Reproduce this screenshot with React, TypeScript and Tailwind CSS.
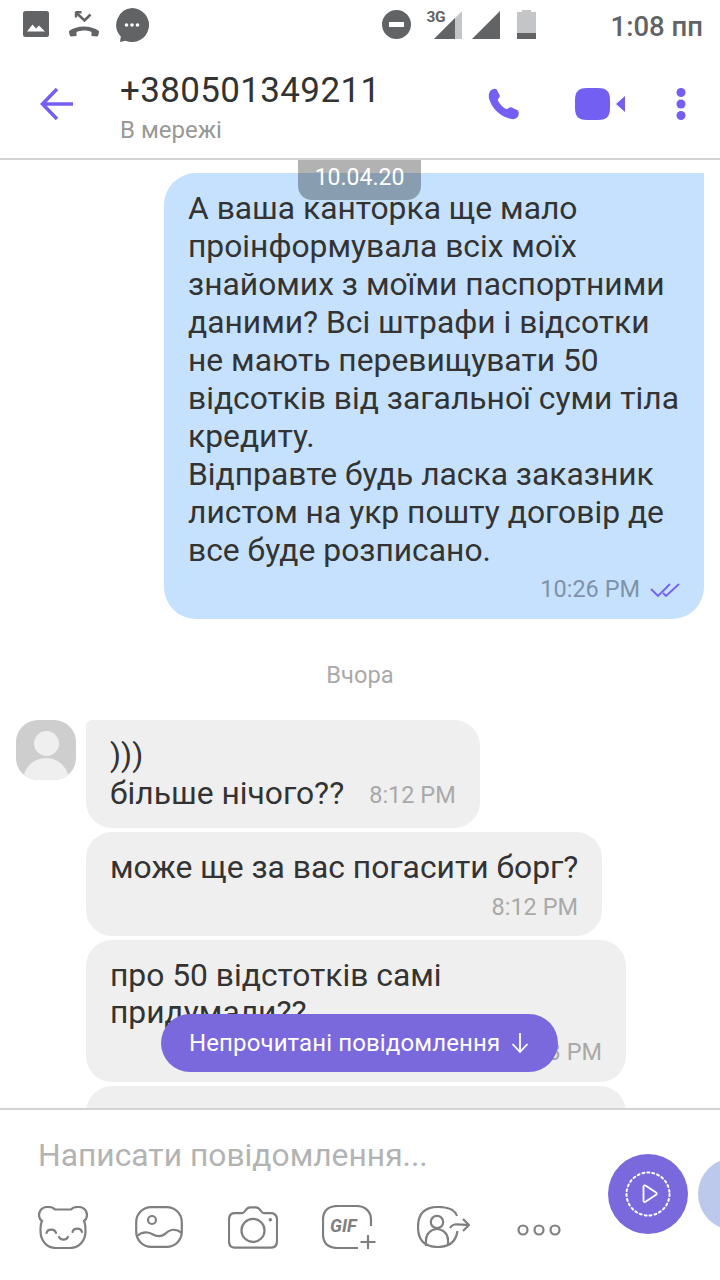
import React from "react";

const P = "#7360f2";
const G = "#7f7f7f";

function Icon({ w, h, vb, children, className = "" }: { w: number; h: number; vb?: string; children: React.ReactNode; className?: string }) {
  return (
    <svg width={w} height={h} viewBox={vb ?? `0 0 ${w} ${h}`} fill="none" className={`block shrink-0 ${className}`}>
      {children}
    </svg>
  );
}

function StatusBar() {
  return (
    <div className="flex h-[50px] items-center pl-[23px] pr-[17px] text-[#616365]">
      <Icon w={26} h={26} className="-mt-[2px]">
        <rect x="0" y="0" width="26" height="26" rx="2.500" fill="#616365" />
        <path d="M4 20.500l5.500-7 3.500 4 3-3 6 6z" fill="#fff" />
      </Icon>
      <Icon w={30} h={26} className="-mt-[2px] ml-[20px]">
        <path d="M7.500 2l8 7.500 6-6" stroke="#616365" strokeWidth="2.600" />
        <path d="M7 1.200h5.500M7 .5v6" stroke="#616365" strokeWidth="2.400" />
        <path d="M0 20c8-6 22-6 30 0 0 2-.5 4-1.500 5.500l-6-.5v-4c-4-2-10-2-15 0v4l-6 .5C.5 24 0 22 0 20z" fill="#616365" />
      </Icon>
      <Icon w={34} h={34} className="ml-[16px] -mt-[1px]">
        <path d="M17 0a17 17 0 1 1-6.500 32.700L5 34l.8-5.500A17 17 0 0 1 17 0z" fill="#616365" />
        <circle cx="11.500" cy="17" r="1.800" fill="#fff" />
        <circle cx="17" cy="17" r="1.800" fill="#fff" />
        <circle cx="22.500" cy="17" r="1.800" fill="#fff" />
      </Icon>
      <div className="flex-1" />
      <Icon w={29} h={29} className="-mt-[1px]">
        <circle cx="14.500" cy="14.500" r="14.500" fill="#616365" />
        <rect x="7" y="12" width="15" height="5" fill="#fff" />
      </Icon>
      <div className="relative ml-[16px] h-[28px] w-[35px] -mt-[1px]">
        <Icon w={28} h={28} className="absolute bottom-0 right-0">
          <path d="M28 0v28H0z" fill="#c4c5c6" />
          <path d="M21 7v21H0z" fill="#616365" />
        </Icon>
        <span className="absolute left-0 top-[-1px] text-[15.500px] font-bold leading-[15px] tracking-[-0.4px] text-[#616365]">3G</span>
      </div>
      <Icon w={28} h={28} className="ml-[10px] -mt-[1px]">
        <path d="M28 0v28H0z" fill="#616365" />
      </Icon>
      <div className="ml-[17px] -mt-[1px] flex h-[29px] w-[19px] flex-col items-center">
        <div className="h-[2px] w-[9px] bg-[#c4c5c6]" />
        <div className="flex h-[27px] w-[19px] flex-col justify-end bg-[#c4c5c6]">
          <div className="h-[6px] bg-[#616365]" />
        </div>
      </div>
      <span className="ml-[75px] mt-[3px] text-[27.500px] font-medium leading-none text-[#616365]">1:08 пп</span>
    </div>
  );
}

function Header() {
  return (
    <div className="flex h-[110px] items-start border-b-2 border-[#d2d2d2]">
      <Icon w={34} h={34} className="ml-[40px] mt-[37px]">
        <path d="M33 17H3M17 2L2.500 17 17 32" stroke={P} strokeWidth="3.500" />
      </Icon>
      <div className="ml-[46px] mt-[20px]">
        <div className="text-[35px] leading-[41px] tracking-[0.35px] text-[#333]">+380501349211</div>
        <div className="mt-[6px] text-[24px] leading-[26px] text-[#989898]">В мережі</div>
      </div>
      <div className="flex-1" />
      <Icon w={32} h={32} vb="0 0 33 33" className="mt-[38px]">
        <path d="M2 3.500C4 .5 7.500 0 9 1.500l3 6c.5 1.500-.5 2.500-2 4.500 1.500 4 5 8 9.500 10 2-1.500 3.500-2.800 5-2l6 3c1.500 1.500 2 4.500 0 7-2 2.500-6 3-10 1C11 28 3 19 1 10.500.5 7.500 1 5 2 3.500z" fill={P} />
      </Icon>
      <Icon w={50} h={32} className="ml-[55px] mt-[38px]">
        <path d="M12 0h11c8 0 12 3 12 12v8c0 9-4 12-12 12H12C4 32 0 29 0 20v-8C0 3 4 0 12 0z" fill={P} />
        <path d="M50 8v16L41 16z" fill={P} />
      </Icon>
      <Icon w={10} h={32} className="ml-[51px] mt-[38px]">
        <circle cx="5" cy="4.500" r="4.500" fill={P} />
        <circle cx="5" cy="16" r="4.500" fill={P} />
        <circle cx="5" cy="27.500" r="4.500" fill={P} />
      </Icon>
      <div className="w-[34px]" />
    </div>
  );
}

function Time({ children }: { children: React.ReactNode }) {
  return <span className="text-[23.500px] leading-[38px] text-[#a9a9a9]">{children}</span>;
}

const bubble = "ml-[86px] shrink-0 rounded-[26px] bg-[#efefef] px-[24px] pt-[19px] text-[31.800px] leading-[38px] text-[#333]";

function Messages() {
  return (
    <div className="relative h-[948px] shrink-0 overflow-hidden">
      <div className="absolute left-[298px] top-0 flex h-[40px] w-[123px] items-center justify-center rounded-b-[14px] bg-black/30 pb-[6px] text-[23px] leading-none text-white">
        10.04.20
      </div>
      <div className="ml-[164px] mt-[13px] h-[446px] w-[540px] rounded-[32px] rounded-tr-none bg-[#c5e1fd] pl-[24px] pr-[24px] pt-[16px] text-[31.800px] leading-[38px] text-[#333]">
        <div className="whitespace-pre">
          {"А ваша канторка ще мало\nпроінформувала всіх моїх\nзнайомих з моїми паспортними\nданими? Всі штрафи і відсотки\nне мають перевищувати 50\nвідсотків від загальної суми тіла\nкредиту.\nВідправте будь ласка заказник\nлистом на укр пошту договір де\nвсе буде розписано."}
        </div>
        <div className="mt-[1px] flex items-center justify-end">
          <span className="text-[23.500px] leading-[38px] text-[#7f93a8]">10:26 PM</span>
          <Icon w={30} h={14} className="ml-[10px] mt-[2px]">
            <path d="M1 6l7 7L20 1M13 10l3 3L29 1" stroke={P} strokeWidth="1.800" />
          </Icon>
        </div>
      </div>
      <div className="mt-[41px] text-center text-[23.700px] leading-[30px] text-[#a9a9a9]">Вчора</div>
      <div className="relative mt-[30px]">
        <div className="absolute left-[16px] top-0 h-[60px] w-[60px] overflow-hidden rounded-[22px] bg-[#cecece]">
          <div className="mx-auto mt-[11px] h-[25px] w-[25px] rounded-full bg-[#efefef]" />
          <div className="mx-auto mt-[2px] h-[30px] w-[46px] rounded-t-[23px] bg-[#efefef]" />
        </div>
        <div className={`${bubble} mb-[4px] h-[108px] w-[394px] rounded-tl-[6px]`}>
          <div className="-mt-[3px]">)))</div>
          <div className="flex items-baseline whitespace-nowrap">
            більше нічого??
            <span className="ml-[25px] -translate-y-[1px]"><Time>8:12 PM</Time></span>
          </div>
        </div>
        <div className={`${bubble} mb-[4px] h-[104px] w-[516px]`}>
          <div className="-mt-[3px] whitespace-nowrap">може ще за вас погасити борг?</div>
          <div className="-mt-[1px] text-right"><Time>8:12 PM</Time></div>
        </div>
        <div className={`${bubble} mb-[4px] h-[142px] w-[540px]`}>
          <div className="-mt-[3px]">про 50 відстотків самі</div>
          <div className="-mt-[1px]">придумали??</div>
          <div className="-mt-[1px] h-[38px] text-right"><Time>8:13 PM</Time></div>
        </div>
        <div className={`${bubble} h-[80px] w-[540px]`} />
      </div>
      <div className="absolute left-[161px] top-[854px] flex h-[58px] w-[397px] items-center rounded-[29px] bg-[#7969dc] pl-[28px] text-[24px] tracking-[0.12px] text-white">
        Непрочитані повідомлення
        <Icon w={18} h={22} className="ml-[11px]">
          <path d="M9 1v19M1.500 12L9 20l7.500-8" stroke="#fff" strokeWidth="1.800" />
        </Icon>
      </div>
    </div>
  );
}

function Composer() {
  return (
    <div className="relative flex-1 overflow-hidden border-t-2 border-[#d2d2d2] bg-white">
      <div className="ml-[38px] mt-[27px] text-[31.800px] leading-[36px] text-[#b3b3b3]">Написати повідомлення...</div>
      <div className="ml-[38px] mt-[32px] flex items-center">
        <Icon w={50} h={43}>
          <path d="M17 3.500H33C34.500 1.500 38 .8 41 1C46 1 49 5 49 9C49 12 47.500 14 46 15C47 17 47.500 20 47.500 25C47.500 35 41 42 32 42H18C9 42 2.500 35 2.500 25C2.500 20 3 17 4 15C2.500 14 1 12 1 9C1 5 4 1 9 1C12 .8 15.500 1.500 17 3.500Z" stroke={G} strokeWidth="2.200" />
          <path d="M8.500 27c1-4.500 8.500-4.500 9.500 0M34.500 26c1-4.500 8.500-4.500 9.500 0M21 31c2 3.500 7 3.500 9 0" stroke={G} strokeWidth="2.200" strokeLinecap="round" />
        </Icon>
        <Icon w={48} h={42} className="ml-[47px]">
          <rect x="1.200" y="1.200" width="45.600" height="39.600" rx="15" stroke={G} strokeWidth="2.200" />
          <circle cx="17" cy="14" r="4" stroke={G} strokeWidth="2.200" />
          <path d="M2 30C8 25 13 26 17 28c5 3 9 3 13 0 4-4 9-7 17-1" stroke={G} strokeWidth="2.200" />
        </Icon>
        <Icon w={50} h={43} vb="0 0 52 44" className="ml-[45px]">
          <path d="M7 7h8c3 0 3-6 8-6h6c5 0 5 6 8 6h7c4 0 7 2 7 7v22c0 5-3 7-7 7H7c-4 0-6-2-6-7V14c0-5 2-7 6-7z" stroke={G} strokeWidth="2.300" />
          <circle cx="26" cy="25" r="12" stroke={G} strokeWidth="2.300" />
          <circle cx="44" cy="14" r="1.800" fill={G} />
        </Icon>
        <div className="relative ml-[44px] h-[44px] w-[54px]">
          <Icon w={54} h={44} className="absolute left-0 top-0">
            <path d="M49 21V15C49 6 43 1 34 1H16C6 1 1 6 1 15v14c0 9 5 14 15 14h20" stroke={G} strokeWidth="2.200" />
            <path d="M46 30v14M38.500 37h15" stroke={G} strokeWidth="2.200" />
          </Icon>
          <span className="absolute left-[8px] top-[11px] text-[18px] font-bold italic leading-[20px] text-[#7f7f7f]">GIF</span>
        </div>
        <Icon w={53} h={42} className="ml-[41px]">
          <path d="M40 10C38 4 31 1 21 1 8 1 1 7 1 21c0 13 7 20 20 20 12 0 18-6 19.500-16" stroke={G} strokeWidth="2.200" />
          <circle cx="20" cy="16" r="6.200" stroke={G} strokeWidth="2.200" />
          <path d="M9 40v-6c0-6 5-11 11-11s11 5 11 11v6" stroke={G} strokeWidth="2.200" />
          <path d="M33 22c3-6 9-3 19-3M46 13l6 6-6 6" stroke={G} strokeWidth="2.200" />
        </Icon>
        <Icon w={44} h={12} className="ml-[47px] mt-[5px]">
          <circle cx="6" cy="6" r="4.500" stroke={G} strokeWidth="2.200" />
          <circle cx="22" cy="6" r="4.500" stroke={G} strokeWidth="2.200" />
          <circle cx="38" cy="6" r="4.500" stroke={G} strokeWidth="2.200" />
        </Icon>
      </div>
      <div className="absolute left-[608px] top-[44px] flex h-[80px] w-[80px] items-center justify-center rounded-full bg-[#7969dc]">
        <Icon w={46} h={46}>
          <circle cx="23" cy="23" r="21.500" stroke="#fff" strokeWidth="2" strokeDasharray="2 3" strokeLinecap="round" />
          <path d="M18.500 15.500c0-1 1-1.500 2-1l10.500 7c1 .8 1 1.500 0 2.300l-10.500 7c-1 .5-2 0-2-1z" stroke="#fff" strokeWidth="1.800" />
        </Icon>
      </div>
      <div className="absolute left-[698px] top-[48px] h-[72px] w-[72px] rounded-full bg-[#bcc8ec]" />
    </div>
  );
}

export default function App() {
  return (
    <div className="flex h-[1280px] w-[720px] flex-col overflow-hidden bg-white font-['Roboto',sans-serif]">
      <StatusBar />
      <Header />
      <Messages />
      <Composer />
    </div>
  );
}
